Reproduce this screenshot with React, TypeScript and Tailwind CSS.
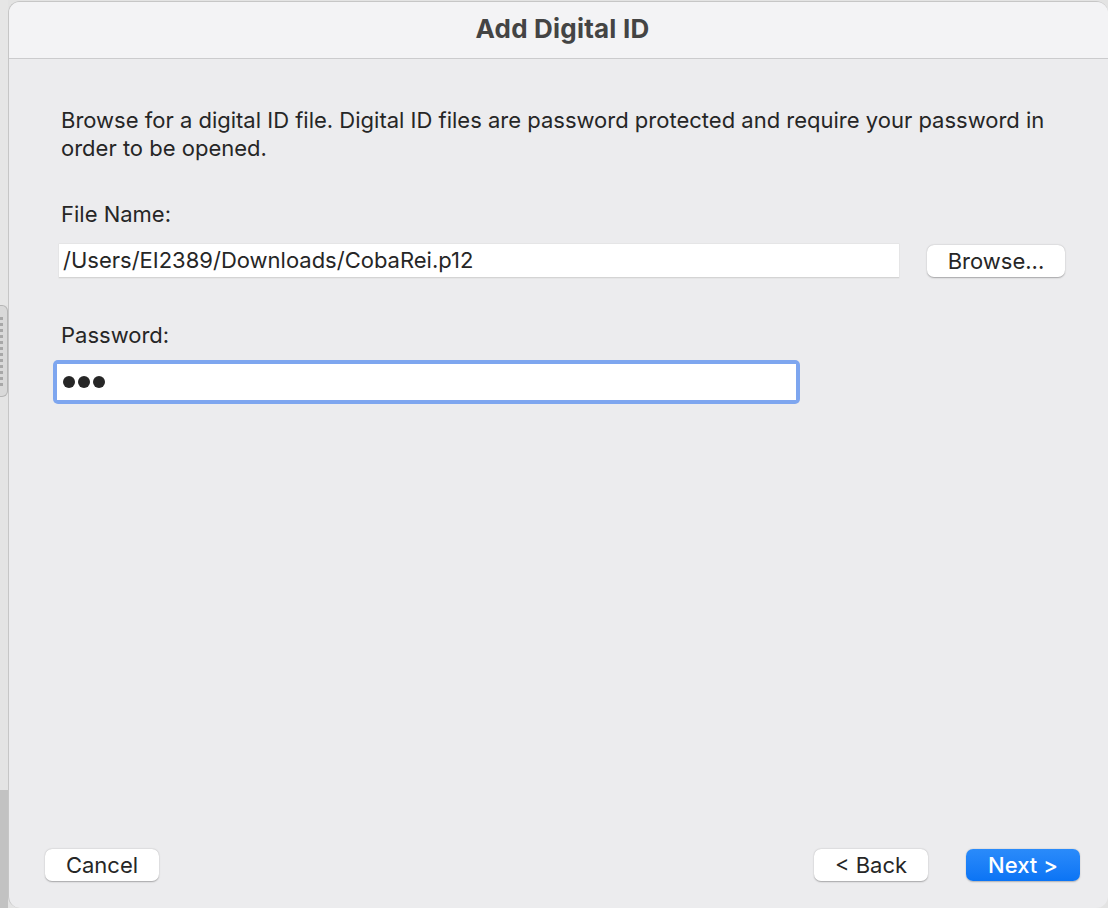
import React from "react";

export default function App() {
  const font = { fontFamily: 'Inter, "Noto Sans", sans-serif' };
  return (
    <div className="w-[1108px] h-[908px] bg-[#e3e3e3] flex overflow-hidden" style={font}>
      <div className="w-[8px] flex flex-col shrink-0">
        <div className="h-[305px] bg-[#e6e6e6]" />
        <div className="h-[92px] bg-[#d9d9d9] border border-l-0 border-[#b5b5b5] rounded-r-[6px] flex flex-col items-start justify-center gap-[3px]">
          {Array.from({ length: 12 }).map((_, i) => (
            <div key={i} className="w-[3px] h-[3px] bg-[#a8a8a8]" />
          ))}
        </div>
        <div className="h-[393px] bg-[#e4e4e4]" />
        <div className="flex-1 bg-[#c2c2c2]" />
      </div>
      <div className="flex-1 mt-[1px] rounded-[12px] border-l border-t border-[#c6c6c6] bg-[#ececee] flex flex-col overflow-hidden">
        <div className="h-[57px] shrink-0 bg-[#f3f3f5] border-b border-[#cbcbcd] flex items-center justify-center pb-[3px]">
          <span className="text-[26px] font-bold text-[#444444] tracking-[0.2px] pl-[8px]">Add Digital ID</span>
        </div>
        <div className="flex-1 flex flex-col pl-[52px] pr-[42px] pt-[47px]">
          <p className="text-[22px] leading-[28px] text-[#262626]">
            Browse for a digital ID file. Digital ID files are password protected and require your password in order to be opened.
          </p>
          <div className="mt-[38px] text-[22px] text-[#262626] leading-[28px]">File Name:</div>
          <div className="mt-[16px] flex items-center">
            <div className="ml-[-2px] w-[840px] h-[34px] bg-white border-b border-[#d4d4d4] shadow-[0_0_0_0.5px_#dedede] flex items-center pl-[4px] text-[22px] text-[#262626]">
              /Users/EI2389/Downloads/CobaRei.p12
            </div>
            <button className="ml-[28px] w-[138px] h-[32px] rounded-[7px] bg-white shadow-[0_0.5px_1.5px_rgba(0,0,0,0.3)] text-[22px] text-[#262626] flex items-center justify-center">
              Browse...
            </button>
          </div>
          <div className="mt-[43px] text-[22px] text-[#262626] leading-[28px]">Password:</div>
          <div className="mt-[11px] ml-[-8px] w-[747px] h-[44px] rounded-[5px] bg-[#7ea6ef] p-[4px]">
            <div className="w-full h-full bg-white flex items-center pl-[6px] gap-[3px]">
              <span className="w-[12px] h-[12px] rounded-full bg-[#262626]" />
              <span className="w-[12px] h-[12px] rounded-full bg-[#262626]" />
              <span className="w-[12px] h-[12px] rounded-full bg-[#262626]" />
            </div>
          </div>
          <div className="flex-1" />
          <div className="flex items-center pb-[27px] ml-[-16px] mr-[-14px]">
            <button className="w-[114px] h-[32px] rounded-[7px] bg-white shadow-[0_0.5px_1.5px_rgba(0,0,0,0.3)] text-[22px] text-[#262626] flex items-center justify-center">
              Cancel
            </button>
            <div className="flex-1" />
            <button className="w-[114px] h-[32px] rounded-[7px] bg-white shadow-[0_0.5px_1.5px_rgba(0,0,0,0.3)] text-[22px] text-[#262626] flex items-center justify-center">
              &lt; Back
            </button>
            <button className="ml-[38px] w-[114px] h-[32px] rounded-[7px] bg-gradient-to-b from-[#2a8bfa] to-[#0a74f5] shadow-[0_0.5px_1.5px_rgba(0,0,0,0.25)] text-[22px] font-medium text-white flex items-center justify-center">
              Next &gt;
            </button>
          </div>
        </div>
      </div>
    </div>
  );
}
